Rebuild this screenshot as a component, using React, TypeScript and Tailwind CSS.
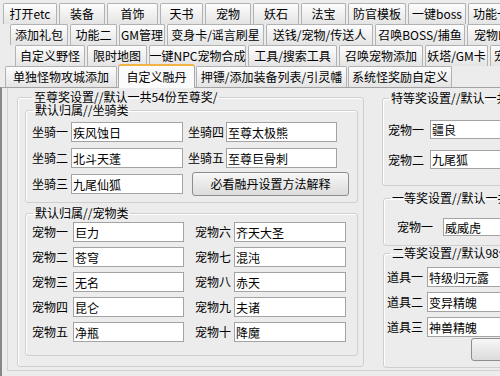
import React from "react";

type Tab = { label: string; w: string; active?: boolean };

// multi-row tab strip, rows are offset like the classic win32 control
const tabRows: { pad: string; gap: string; tabs: Tab[] }[] = [
  {
    pad: "pl-[3px]",
    gap: "gap-[2px]",
    tabs: [
      { label: "打开etc", w: "w-[54px]" },
      { label: "装备", w: "w-[46px]" },
      { label: "首饰", w: "w-[51px]" },
      { label: "天书", w: "w-[43px]" },
      { label: "宠物", w: "w-[46px]" },
      { label: "妖石", w: "w-[46px]" },
      { label: "法宝", w: "w-[45px]" },
      { label: "防官模板", w: "w-[58px]" },
      { label: "一键boss", w: "w-[58px]" },
      { label: "功能一", w: "w-[46px]" },
    ],
  },
  {
    pad: "pl-[10px]",
    gap: "gap-[2px]",
    tabs: [
      { label: "添加礼包", w: "w-[58px]" },
      { label: "功能二", w: "w-[47px]" },
      { label: "GM管理", w: "w-[46px]" },
      { label: "变身卡/谣言刷星", w: "w-[97px]" },
      { label: "送钱/宠物/传送人", w: "w-[107px]" },
      { label: "召唤BOSS/捕鱼", w: "w-[90px]" },
      { label: "宠物DIY", w: "w-[56px]" },
    ],
  },
  {
    pad: "pl-[15px]",
    gap: "gap-[2px]",
    tabs: [
      { label: "自定义野怪", w: "w-[70px]" },
      { label: "限时地图", w: "w-[60px]" },
      { label: "一键NPC宠物合成", w: "w-[97px]" },
      { label: "工具/搜索工具", w: "w-[89px]" },
      { label: "召唤宠物添加", w: "w-[84px]" },
      { label: "妖塔/GM卡", w: "w-[63px]" },
      { label: "宠物编辑", w: "w-[56px]" },
    ],
  },
  {
    pad: "pl-[5px]",
    gap: "gap-[1px]",
    tabs: [
      { label: "单独怪物攻城添加", w: "w-[112px]" },
      { label: "自定义融丹", w: "w-[77px]", active: true },
      { label: "押镖/添加装备列表/引灵幡", w: "w-[151px]" },
      { label: "系统怪奖励自定义", w: "w-[104px]" },
    ],
  },
];

const mountsA = [
  ["坐骑一", "疾风蚀日"],
  ["坐骑二", "北斗天蓬"],
  ["坐骑三", "九尾仙狐"],
];
const mountsB = [
  ["坐骑四", "至尊太极熊"],
  ["坐骑五", "至尊巨骨刺"],
];

const pets = [
  ["宠物一", "巨力", "宠物六", "齐天大圣"],
  ["宠物二", "苍穹", "宠物七", "混沌"],
  ["宠物三", "无名", "宠物八", "赤天"],
  ["宠物四", "昆仑", "宠物九", "夫诸"],
  ["宠物五", "净瓶", "宠物十", "降魔"],
];

const items = [
  ["道具一", "特级归元露"],
  ["道具二", "变异精魄"],
  ["道具三", "神兽精魄"],
];

function Field({ value, w, h = "h-[20px]" }: { value: string; w: string; h?: string }) {
  return (
    <input
      readOnly
      defaultValue={value}
      className={`${w} ${h} shrink-0 border border-[#a3a3a3] bg-white px-[1px] text-[12px] leading-[14px] text-black outline-none`}
    />
  );
}

function Legend({ children, ml = "ml-[7px]" }: { children: React.ReactNode; ml?: string }) {
  return <legend className={`${ml} px-[2px] leading-[12px] whitespace-nowrap`}>{children}</legend>;
}

const groupCls = "shrink-0 border border-[#cfcfcf] rounded-[3px] shadow-[inset_1px_1px_0_#ffffff]";

export default function App() {
  return (
    <div className="w-[500px] h-[376px] overflow-hidden bg-[#ececec] text-[12px] text-black font-['Noto_Sans_CJK_SC',sans-serif]">
      {/* Tabs */}
      <div className="pt-[3px]">
        {tabRows.map((row, ri) => (
          <div key={ri} className={`flex h-[21px] ${row.pad} ${row.gap}`}>
            {row.tabs.map((t) =>
              t.active ? (
                <div
                  key={t.label}
                  className={`${t.w} relative z-10 -mt-[2px] h-[24px] shrink-0 flex items-center justify-center whitespace-nowrap rounded-t-[3px] border border-b-0 border-[#a8a8a8] border-t-2 border-t-[#f3b446] bg-[#fbfbfb]`}
                >
                  {t.label}
                </div>
              ) : (
                <div
                  key={t.label}
                  className={`${t.w} h-full shrink-0 flex items-center justify-center whitespace-nowrap rounded-t-[2px] border border-b-0 border-[#b2b2b2] bg-gradient-to-b from-[#fdfdfd] to-[#e4e4e4]`}
                >
                  {t.label}
                </div>
              )
            )}
          </div>
        ))}
      </div>

      {/* Page */}
      <div className="flex h-[289px] border-t border-t-[#a3a3a3] border-l-2 border-l-[#878787]">
        <div className="ml-[5px] mb-[5px] flex flex-1 border-l border-b border-[#d2d2d2]">
          {/* 至尊奖 */}
          <fieldset className={`${groupCls} ml-[9px] mt-[3px] h-[276px] w-[347px] pl-[7px]`}>
            <Legend>至尊奖设置//默认一共54份至尊奖/</Legend>

            <fieldset className={`${groupCls} mt-[1px] h-[99px] w-[333px]`}>
              <Legend>默认归属//坐骑类</Legend>
              <div className="flex pl-[6px] pt-[6px]">
                <div className="flex flex-col gap-[6px]">
                  {mountsA.map(([l, v]) => (
                    <div key={l} className="flex h-[20px] items-center">
                      <span className="w-[39px] shrink-0">{l}</span>
                      <Field value={v} w="w-[112px]" />
                    </div>
                  ))}
                </div>
                <div className="ml-[5px] flex flex-col gap-[6px]">
                  {mountsB.map(([l, v]) => (
                    <div key={l} className="flex h-[20px] items-center">
                      <span className="w-[38px] shrink-0">{l}</span>
                      <Field value={v} w="w-[111px]" />
                    </div>
                  ))}
                  <div className="flex h-[20px] items-center">
                    <button className="ml-[4px] h-[24px] w-[157px] shrink-0 rounded-[3px] border border-[#8e8e8e] bg-gradient-to-b from-[#f7f7f7] to-[#dcdcdc] text-[12px]">
                      必看融丹设置方法解释
                    </button>
                  </div>
                </div>
              </div>
            </fieldset>

            <fieldset className={`${groupCls} mt-[4px] h-[149px] w-[333px]`}>
              <Legend>默认归属//宠物类</Legend>
              <div className="flex flex-col gap-[5px] pl-[6px] pt-[3px]">
                {pets.map(([l1, v1, l2, v2]) => (
                  <div key={l1} className="flex h-[20px] items-center">
                    <span className="w-[41px] shrink-0">{l1}</span>
                    <Field value={v1} w="w-[111px]" />
                    <span className="ml-[11px] w-[39px] shrink-0">{l2}</span>
                    <Field value={v2} w="w-[112px]" />
                  </div>
                ))}
              </div>
            </fieldset>
          </fieldset>

          {/* right column */}
          <div className="ml-[18px] mt-[4px] flex w-[150px] shrink-0 flex-col">
            <fieldset className={`${groupCls} h-[94px] w-[150px]`}>
              <Legend ml="ml-[6px]">特等奖设置//默认一共2份特等奖/</Legend>
              <div className="flex flex-col gap-[11px] pl-[5px] pt-[16px]">
                <div className="flex h-[19px] items-center">
                  <span className="w-[42px] shrink-0">宠物一</span>
                  <Field value="疆良" w="w-[100px]" h="h-[19px]" />
                </div>
                <div className="flex h-[19px] items-center">
                  <span className="w-[42px] shrink-0">宠物二</span>
                  <Field value="九尾狐" w="w-[100px]" h="h-[19px]" />
                </div>
              </div>
            </fieldset>

            <fieldset className={`${groupCls} mt-[6px] ml-[1px] h-[54px] w-[150px]`}>
              <Legend ml="ml-[6px]">一等奖设置//默认一共6份一等奖/</Legend>
              <div className="flex pl-[13px] pt-[14px]">
                <div className="flex h-[18px] items-center">
                  <span className="w-[46px] shrink-0">宠物一</span>
                  <Field value="威威虎" w="w-[100px]" h="h-[18px]" />
                </div>
              </div>
            </fieldset>

            <fieldset className={`${groupCls} mt-[1px] ml-[1px] h-[121px] w-[150px]`}>
              <Legend ml="ml-[6px]">二等奖设置//默认98份二等奖/</Legend>
              <div className="flex flex-col gap-[5px] pl-[3px] pt-[8px]">
                {items.map(([l, v]) => (
                  <div key={l} className="flex h-[20px] items-center">
                    <span className="w-[40px] shrink-0">{l}</span>
                    <Field value={v} w="w-[100px]" />
                  </div>
                ))}
                <button className="-mt-[4px] ml-[84px] h-[23px] w-[120px] shrink-0 rounded-[3px] border border-[#8e8e8e] bg-gradient-to-b from-[#f7f7f7] to-[#dcdcdc] text-[12px]">
                  保存设置
                </button>
              </div>
            </fieldset>
          </div>
        </div>
      </div>
    </div>
  );
}
